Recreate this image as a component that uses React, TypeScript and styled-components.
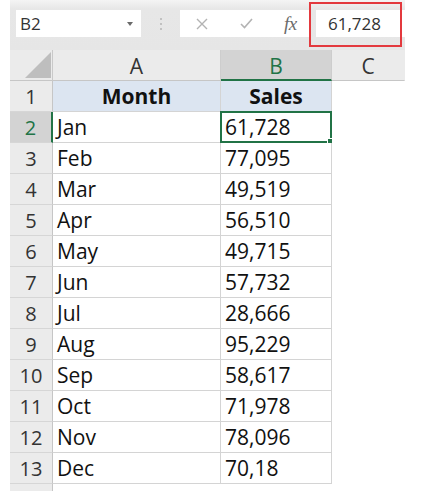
import React from "react";
import styled, { createGlobalStyle, css } from "styled-components";

const GREEN = "#217346";

const GlobalStyle = createGlobalStyle`
  html, body {
    margin: 0;
    padding: 0;
    background: #ffffff;
  }
  body {
    font-family: "Open Sans", "Liberation Sans", sans-serif;
    color: #1a1a1a;
  }
`;

const Sheet = styled.div`
  margin-left: 10px;
  width: 395px;
  overflow: hidden;
`;

const Toolbar = styled.div`
  position: relative;
  height: 50px;
  display: flex;
  align-items: flex-start;
  padding: 10px 0 0 6px;
  box-sizing: border-box;
  background: linear-gradient(#f4f4f4 0, #e7e7e7 9px, #e6e6e6 100%);
`;

const NameBox = styled.div`
  width: 125px;
  height: 27px;
  box-sizing: border-box;
  background: #ffffff;
  display: flex;
  align-items: center;
  justify-content: space-between;
  padding: 0 8px 0 4px;
  font-size: 17px;
  color: #333;
`;

const DropArrow = styled.span`
  width: 0;
  height: 0;
  border-left: 3.5px solid transparent;
  border-right: 3.5px solid transparent;
  border-top: 4px solid #6a6a6a;
`;

const Dots = styled.div`
  width: 4px;
  margin: 8px 16px 0 19px;
  display: flex;
  flex-direction: column;
  gap: 3px;

  span {
    width: 2px;
    height: 2px;
    background: #b4b4b4;
    border-radius: 1px;
  }
`;

const FormulaButtons = styled.div`
  width: 130px;
  height: 27px;
  background: #ffffff;
  display: flex;
  align-items: center;
  box-sizing: border-box;
  padding-left: 16px;
`;

const IconSlot = styled.span<{ $w: number }>`
  width: ${(p) => p.$w}px;
  display: flex;
  align-items: center;
`;

const Fx = styled.span`
  font-family: "Liberation Serif", "DejaVu Serif", serif;
  font-style: italic;
  font-size: 19px;
  color: #6b6b6b;
  letter-spacing: -0.5px;
`;

const FormulaInput = styled.div`
  flex: 1;
  margin-left: 6px;
  height: 27px;
  background: #ffffff;
  display: flex;
  align-items: center;
  padding-left: 12px;
  font-size: 17px;
  color: #333;
`;

const Highlight = styled.div`
  position: absolute;
  left: 299px;
  top: 2px;
  width: 93px;
  height: 45px;
  box-sizing: border-box;
  border: 2.5px solid #e3393e;
  pointer-events: none;
`;

const Grid = styled.div`
  display: grid;
  grid-template-columns: 43px 168px 111px 73px;
  grid-auto-rows: 31px;
`;

const Corner = styled.div`
  position: relative;
  background: #ebebeb;
  border-right: 1px solid #c9c9c9;
  border-bottom: 1px solid #c6c6c6;
  box-sizing: border-box;

  &::after {
    content: "";
    position: absolute;
    left: 15px;
    top: 2px;
    width: 26px;
    height: 26px;
    background: #bebebe;
    clip-path: polygon(100% 0, 100% 100%, 0 100%);
  }
`;

const ColHeader = styled.div<{ $active?: boolean; $last?: boolean }>`
  background: ${(p) => (p.$active ? "#d3d3d3" : "#ebebeb")};
  color: ${(p) => (p.$active ? GREEN : "#333")};
  border-right: 1px solid ${(p) => (p.$last ? "transparent" : "#cdcdcd")};
  border-bottom: ${(p) => (p.$active ? `2px solid ${GREEN}` : "1px solid #c6c6c6")};
  box-sizing: border-box;
  display: flex;
  align-items: center;
  justify-content: center;
  font-size: 21px;
  padding-top: 2px;
`;

const RowHeader = styled.div<{ $active?: boolean }>`
  background: ${(p) => (p.$active ? "#d3d3d3" : "#ebebeb")};
  color: ${(p) => (p.$active ? GREEN : "#333")};
  border-right: ${(p) => (p.$active ? `2px solid ${GREEN}` : "1px solid #c6c6c6")};
  border-bottom: 1px solid #d6d6d6;
  box-sizing: border-box;
  display: flex;
  align-items: center;
  justify-content: center;
  font-size: 20px;
`;

const Cell = styled.div<{ $title?: boolean; $selected?: boolean; $blank?: boolean }>`
  position: relative;
  box-sizing: border-box;
  display: flex;
  align-items: center;
  padding-left: 4px;
  font-size: 21px;
  color: #111;
  background: #ffffff;
  border-right: 1px solid ${(p) => (p.$blank ? "transparent" : "#d4d4d4")};
  border-bottom: 1px solid ${(p) => (p.$blank ? "transparent" : "#d4d4d4")};

  ${(p) =>
    p.$title &&
    css`
      background: #dce5f1;
      font-weight: 700;
      justify-content: center;
      padding-left: 0;
    `}

  ${(p) =>
    p.$selected &&
    css`
      &::before {
        content: "";
        position: absolute;
        left: -1px;
        top: -1px;
        right: -1px;
        bottom: -1px;
        border: 2px solid ${GREEN};
      }
      &::after {
        content: "";
        position: absolute;
        right: -3px;
        bottom: -3px;
        width: 5px;
        height: 5px;
        background: ${GREEN};
        border: 1px solid #ffffff;
      }
    `}
`;

const data: [string, string][] = [
  ["Jan", "61,728"],
  ["Feb", "77,095"],
  ["Mar", "49,519"],
  ["Apr", "56,510"],
  ["May", "49,715"],
  ["Jun", "57,732"],
  ["Jul", "28,666"],
  ["Aug", "95,229"],
  ["Sep", "58,617"],
  ["Oct", "71,978"],
  ["Nov", "78,096"],
  ["Dec", "70,18"],
];

const CancelIcon = () => (
  <svg width="12" height="12" viewBox="0 0 12 12">
    <path d="M1 1 L11 11 M11 1 L1 11" stroke="#b3b3b3" strokeWidth="1.4" fill="none" />
  </svg>
);

const CheckIcon = () => (
  <svg width="13" height="11" viewBox="0 0 13 11">
    <path d="M1 6 L4.5 9.5 L12 1" stroke="#b3b3b3" strokeWidth="1.6" fill="none" />
  </svg>
);

const App: React.FC = () => {
  return (
    <>
      <GlobalStyle />
      <Sheet>
        <Toolbar>
          <NameBox>
            B2
            <DropArrow />
          </NameBox>
          <Dots>
            <span />
            <span />
            <span />
          </Dots>
          <FormulaButtons>
            <IconSlot $w={44}>
              <CancelIcon />
            </IconSlot>
            <IconSlot $w={44}>
              <CheckIcon />
            </IconSlot>
            <Fx>fx</Fx>
          </FormulaButtons>
          <FormulaInput>61,728</FormulaInput>
          <Highlight />
        </Toolbar>

        <Grid>
          <Corner />
          <ColHeader>A</ColHeader>
          <ColHeader $active>B</ColHeader>
          <ColHeader $last>C</ColHeader>

          <RowHeader>1</RowHeader>
          <Cell $title>Month</Cell>
          <Cell $title>Sales</Cell>
          <Cell $blank />

          {data.map(([month, sales], i) => (
            <React.Fragment key={month}>
              <RowHeader $active={i === 0}>{i + 2}</RowHeader>
              <Cell>{month}</Cell>
              <Cell $selected={i === 0}>{sales}</Cell>
              <Cell $blank />
            </React.Fragment>
          ))}

          <RowHeader />
          <Cell $blank />
          <Cell $blank />
          <Cell $blank />
        </Grid>
      </Sheet>
    </>
  );
};

export default App;
